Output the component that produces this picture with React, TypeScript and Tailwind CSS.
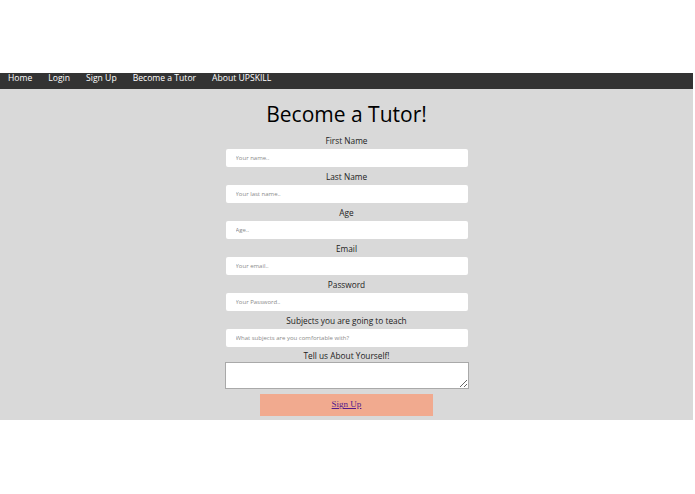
import React from "react";

const fields = [
  { label: "First Name", ph: "Your name.." },
  { label: "Last Name", ph: "Your last name.." },
  { label: "Age", ph: "Age.." },
  { label: "Email", ph: "Your email.." },
  { label: "Password", ph: "Your Password.." },
  { label: "Subjects you are going to teach", ph: "What subjects are you comfortable with?" },
];

export default function App() {
  return (
    <div className="w-[695px] h-[494px] bg-white overflow-hidden" style={{ fontFamily: '"Open Sans", "Liberation Sans", sans-serif' }}>
      <div className="h-[73px]" />
      <nav className="w-[693px] h-[16px] bg-[#333333] flex items-start text-white text-[8.6px] leading-[11px]">
        {["Home", "Login", "Sign Up", "Become a Tutor", "About UPSKILL"].map((t) => (
          <a key={t} className="px-[8px] whitespace-nowrap">{t}</a>
        ))}
      </nav>
      <main className="w-[693px] h-[331px] bg-[#d9d9d9] flex flex-col items-center pt-[8px] text-[#222]">
        <h1 className="h-[34px] leading-[34px] text-[21px] font-normal text-black">Become a Tutor!</h1>
        {fields.map((f) => (
          <div key={f.label} className="flex flex-col items-center">
            <div className="h-[18px] leading-[19px] text-[8.3px]">{f.label}</div>
            <input
              className="w-[242px] h-[18px] bg-white rounded-[2px] pl-[10px] text-[6px] placeholder:text-[#8a8a8a] outline-none"
              placeholder={f.ph}
            />
          </div>
        ))}
        <div className="h-[15px] leading-[18px] text-[8.3px]">Tell us About Yourself!</div>
        <textarea className="w-[244px] h-[27px] bg-white border border-[#a9a9a9] block" />
        <button className="mt-[5px] w-[173px] h-[22px] bg-[#f1aa8f] flex items-center justify-center">
          <a href="#" className="text-[9px] text-[#551a8b] underline" style={{ fontFamily: '"Liberation Serif", serif' }}>Sign Up</a>
        </button>
      </main>
    </div>
  );
}
